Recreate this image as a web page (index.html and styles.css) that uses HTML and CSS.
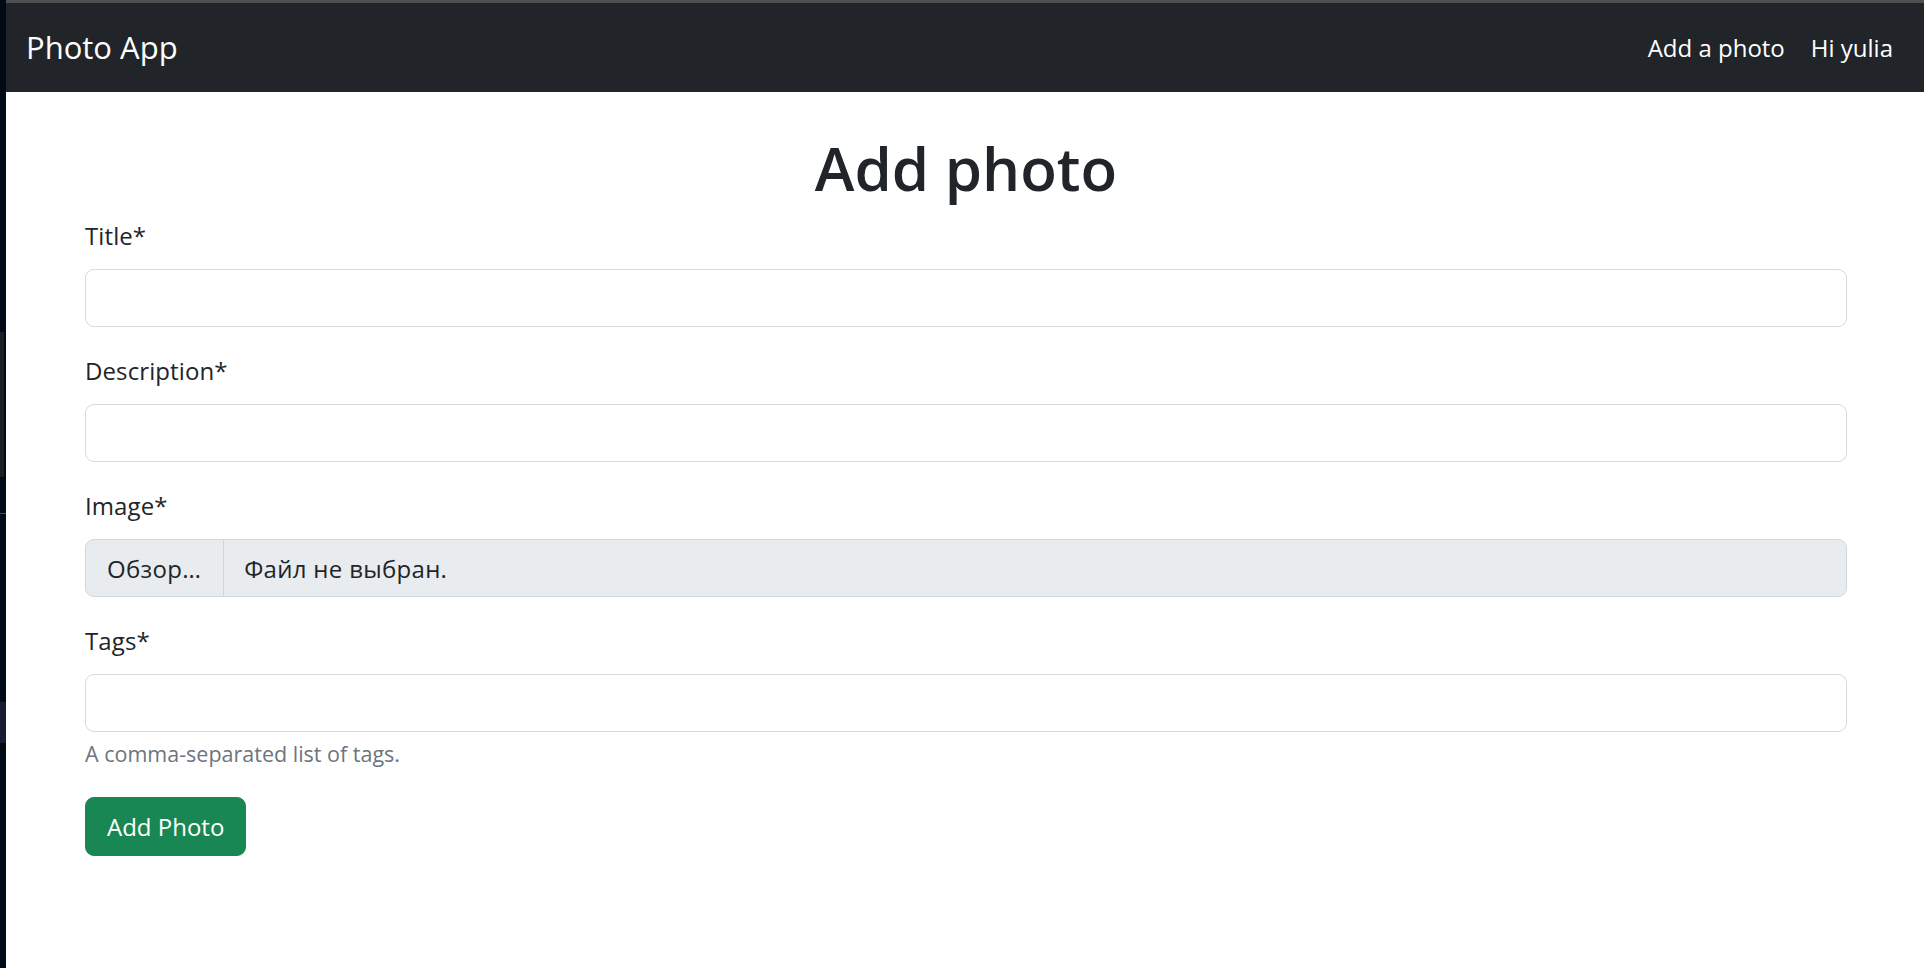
FILE: index.html
```html
<!DOCTYPE html>
<html lang="en">
<head>
<meta charset="utf-8">
<title>Photo App</title>
<link rel="stylesheet" href="styles.css">
</head>
<body>
<div class="app">
  <div class="edge">
    <div class="edge-a"></div>
    <div class="edge-line"></div>
    <div class="edge-b"></div>
  </div>
  <div class="main">
    <div class="topline"></div>
    <nav class="navbar">
      <a class="brand" href="#">Photo App</a>
      <div class="nav-links">
        <a class="nav-link" href="#">Add a photo</a>
        <a class="nav-link" href="#">Hi yulia</a>
      </div>
    </nav>
    <main class="content">
      <h1 class="title">Add photo</h1>
      <form class="form">
        <div class="group">
          <label class="label">Title*</label>
          <div class="input"></div>
        </div>
        <div class="group">
          <label class="label">Description*</label>
          <div class="input"></div>
        </div>
        <div class="group">
          <label class="label">Image*</label>
          <div class="file-input">
            <span class="file-btn">Обзор…</span>
            <span class="file-name">Файл не выбран.</span>
          </div>
        </div>
        <div class="group group-last">
          <label class="label">Tags*</label>
          <div class="input"></div>
          <div class="help">A comma-separated list of tags.</div>
        </div>
        <button class="btn" type="button">Add Photo</button>
      </form>
    </main>
  </div>
</div>
</body>
</html>
```
FILE: styles.css
```css
* { box-sizing: border-box; }
html, body { margin: 0; padding: 0; height: 100%; }
body {
  font-family: "Open Sans", "Noto Sans", sans-serif;
  color: #212529;
  background: #ffffff;
}
.app {
  display: flex;
  min-height: 100vh;
}
.edge {
  width: 6px;
  flex: 0 0 6px;
  background: #010b15;
  display: flex;
  flex-direction: column;
}
.edge-a {
  margin-top: 332px;
  width: 4px;
  height: 145px;
  background: #1b1f28;
}
.edge-line {
  margin-top: 36px;
  height: 1px;
  background: #4a3f7a;
}
.edge-b {
  margin-top: 188px;
  height: 41px;
  background: #161d33;
}
.main {
  flex: 1;
  display: flex;
  flex-direction: column;
}
.topline {
  height: 3px;
  background: #505050;
}
.navbar {
  height: 89px;
  background: #212529;
  display: flex;
  align-items: center;
  justify-content: space-between;
  padding: 0 18px 0 20px;
}
.brand {
  color: #ffffff;
  text-decoration: none;
  font-size: 31px;
  line-height: 45px;
}
.nav-links {
  display: flex;
}
.nav-link {
  color: #ffffff;
  text-decoration: none;
  font-size: 24px;
  line-height: 36px;
  padding: 0 13px;
}
.content {
  padding: 0 77px 0 79px;
}
.title {
  margin: 40px 0 14px;
  text-align: center;
  font-size: 60px;
  line-height: 72px;
  font-weight: 600;
}
.form {
  display: flex;
  flex-direction: column;
  align-items: flex-start;
}
.group {
  width: 100%;
  margin-bottom: 26px;
}
.group-last {
  margin-bottom: 28px;
}
.label {
  display: block;
  font-size: 24px;
  line-height: 36px;
  margin-bottom: 15px;
  letter-spacing: 0.1px;
}
.input {
  height: 58px;
  border: 1px solid #d6dadf;
  border-radius: 9px;
  background: #ffffff;
}
.file-input {
  height: 58px;
  border: 1px solid #d3d7dc;
  border-radius: 9px;
  background: #e9ecef;
  display: flex;
  align-items: center;
  font-size: 24px;
  letter-spacing: 0.3px;
  overflow: hidden;
}
.file-btn {
  height: 100%;
  display: flex;
  align-items: center;
  padding: 0 22px 0 21px;
  border-right: 1px solid #d0d4d9;
}
.file-name {
  padding-left: 20px;
}
.help {
  margin-top: 6px;
  font-size: 21.5px;
  line-height: 31px;
  color: #6c757d;
}
.btn {
  height: 59px;
  padding: 0 21px;
  border: 1px solid #198754;
  border-radius: 9px;
  background: #198754;
  color: #ffffff;
  font-family: inherit;
  font-size: 24px;
  line-height: 36px;
  display: inline-flex;
  align-items: center;
}
```
